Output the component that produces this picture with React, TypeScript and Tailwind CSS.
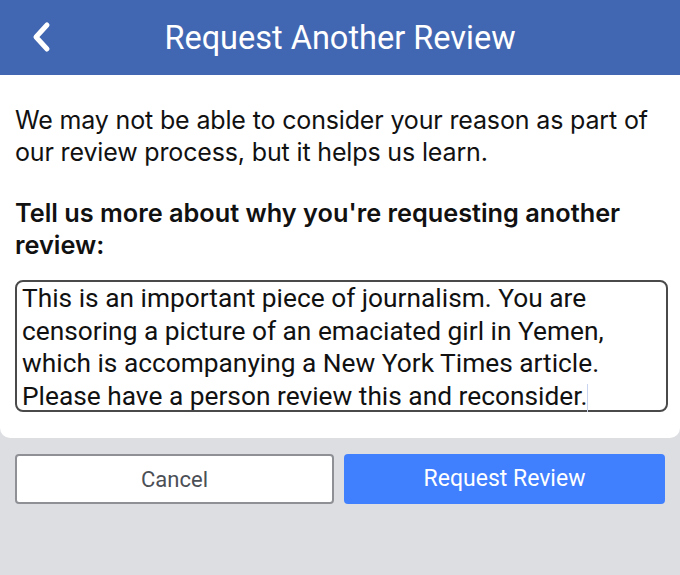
import React from "react";

export default function App() {
  return (
    <div className="w-[680px] h-[575px] bg-[#dcdee2] overflow-hidden" style={{ fontFamily: "Inter, 'Noto Sans', sans-serif" }}>
      <div className="h-[75px] bg-[#4267b2] flex items-center relative">
        <svg className="absolute left-[30px] top-[21px]" width="24" height="32" viewBox="0 0 24 32">
          <path d="M17 4 L6 16 L17 28" fill="none" stroke="white" strokeWidth="5" strokeLinecap="round" strokeLinejoin="round" />
        </svg>
        <div className="flex-1 text-center text-white text-[32.5px] font-normal pt-[1px]" style={{ fontFamily: "Roboto, sans-serif" }}>
          Request Another Review
        </div>
      </div>
      <div className="bg-white rounded-b-[10px] px-[15px] pt-[29px] pb-[26px]">
        <p className="text-[25px] leading-[32px] text-[#111] tracking-[-0.15px] whitespace-nowrap">
          We may not be able to consider your reason as part of
          <br />
          our review process, but it helps us learn.
        </p>
        <p className="mt-[29px] text-[25.3px] leading-[32px] font-semibold text-[#111] tracking-[0px] whitespace-nowrap">
          Tell us more about why you're requesting another
          <br />
          review:
        </p>
        <div className="mt-[19px] mr-[-3px] border-2 border-[#4a4a4a] rounded-[8px] h-[132px] px-[5px] text-[26.3px] leading-[32.5px] text-[#111] whitespace-nowrap" style={{ fontFamily: "Roboto, sans-serif" }}>
          This is an important piece of journalism. You are
          <br />
          censoring a picture of an emaciated girl in Yemen,
          <br />
          which is accompanying a New York Times article.
          <br />
          Please have a person review this and reconsider.<span className="inline-block w-[1px] h-[28px] bg-[#c8d4f0] align-middle" />
        </div>
      </div>
      <div className="flex gap-[10px] px-[15px] mt-[16px]">
        <button className="w-[319px] h-[50px] bg-white border-2 border-[#8e9096] rounded-[4px] text-[22px] text-[#4b4f56]" style={{ fontFamily: "Roboto, sans-serif" }}>
          Cancel
        </button>
        <button className="flex-1 h-[50px] bg-[#4080ff] rounded-[4px] text-[23px] text-white" style={{ fontFamily: "Roboto, sans-serif" }}>
          Request Review
        </button>
      </div>
    </div>
  );
}
